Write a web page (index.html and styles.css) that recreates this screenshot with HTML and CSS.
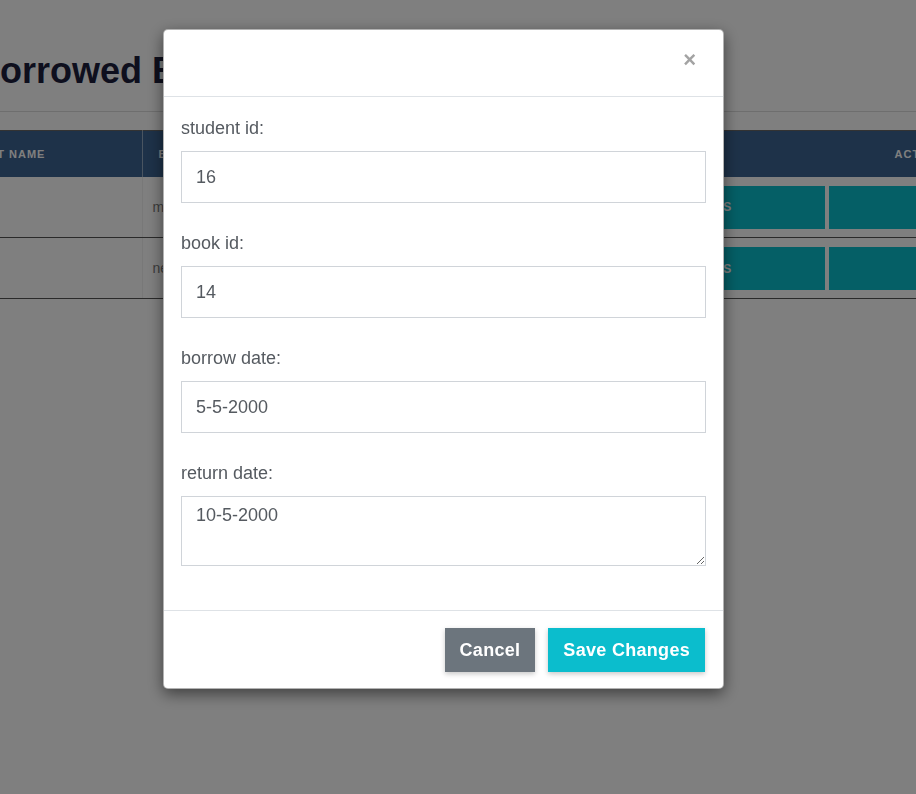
FILE: index.html
```html
<!DOCTYPE html>
<html lang="en">
<head>
<meta charset="utf-8">
<title>Borrowed Books</title>
<link rel="stylesheet" href="styles.css">
</head>
<body>
<div class="page">
  <h1 class="title">Borrowed Books</h1>
  <div class="rule"></div>
  <table class="grid">
    <colgroup>
      <col class="c-name"><col class="c-book"><col class="c-date"><col class="c-actions">
    </colgroup>
    <thead>
      <tr>
        <th>Student name</th>
        <th>Book name</th>
        <th>Borrow date</th>
        <th class="th-actions">Actions</th>
      </tr>
    </thead>
    <tbody>
      <tr>
        <td>ahmed</td>
        <td>mathematics</td>
        <td>5-5-2000</td>
        <td class="td-actions"><span class="row-btn">Details</span><span class="row-btn">Edit</span></td>
      </tr>
      <tr>
        <td>sara</td>
        <td>networks</td>
        <td>6-5-2000</td>
        <td class="td-actions"><span class="row-btn">Details</span><span class="row-btn">Edit</span></td>
      </tr>
    </tbody>
  </table>
</div>

<div class="backdrop"></div>

<div class="modal">
  <div class="modal-header">
    <span class="close">&times;</span>
  </div>
  <div class="modal-body">
    <div class="group">
      <label class="label">student id:</label>
      <input class="field" type="text" value="16">
    </div>
    <div class="group">
      <label class="label">book id:</label>
      <input class="field" type="text" value="14">
    </div>
    <div class="group">
      <label class="label">borrow date:</label>
      <input class="field" type="text" value="5-5-2000">
    </div>
    <div class="group">
      <label class="label">return date:</label>
      <textarea class="field area">10-5-2000</textarea>
    </div>
  </div>
  <div class="modal-footer">
    <button class="btn btn-cancel">Cancel</button>
    <button class="btn btn-save">Save Changes</button>
  </div>
</div>
</body>
</html>
```

FILE: styles.css
```css
html, body {
  margin: 0;
  padding: 0;
  overflow: hidden;
  background: #ffffff;
  font-family: "Liberation Sans", Arial, sans-serif;
}

.page {
  margin-left: -26px;
  padding-top: 49px;
}

.title {
  margin: 0;
  font-size: 36px;
  line-height: 43px;
  font-weight: 700;
  color: #1c1f3c;
}

.rule {
  margin-top: 19px;
  margin-left: 26px;
  height: 1px;
  background: #dcdcdc;
}

.grid {
  margin-top: 18px;
  margin-left: -44px;
  width: 1400px;
  border-collapse: collapse;
  table-layout: fixed;
}

.c-name { width: 212px; }
.c-book { width: 300px; }
.c-date { width: 140px; }
.c-actions { width: auto; }

.grid thead tr {
  height: 46px;
}

.grid thead th {
  padding: 0 0 0 16px;
  background: #3c6492;
  color: #ffffff;
  font-size: 11px;
  font-weight: 700;
  letter-spacing: 1px;
  text-transform: uppercase;
  text-align: left;
  border-top: 1px solid #666666;
  border-right: 1px solid rgba(255, 255, 255, 0.45);
}

.grid thead th.th-actions {
  padding-left: 312px;
  border-right: none;
}

.grid tbody tr {
  height: 61px;
}

.grid tbody td {
  padding: 0 0 0 10px;
  font-size: 14px;
  color: #7a7a7a;
  border-bottom: 1px solid #555555;
  border-right: 1px solid #f0f0f0;
  vertical-align: middle;
}

.grid tbody td.td-actions {
  padding: 9px 0 8px 10px;
  border-right: none;
  font-size: 0;
}

.row-btn {
  display: inline-flex;
  align-items: center;
  justify-content: center;
  box-sizing: border-box;
  width: 232px;
  height: 43px;
  margin-right: 4px;
  padding-right: 10px;
  background: #0abecc;
  color: #ffffff;
  font-size: 12px;
  font-weight: 700;
  letter-spacing: 1px;
  text-transform: uppercase;
  vertical-align: top;
}

.backdrop {
  position: fixed;
  inset: 0;
  background: rgba(0, 0, 0, 0.5);
}

.modal {
  position: fixed;
  left: 163px;
  top: 29px;
  width: 561px;
  box-sizing: border-box;
  background: #ffffff;
  border: 1px solid rgba(0, 0, 0, 0.3);
  border-radius: 5px;
  box-shadow: 0 5px 15px rgba(0, 0, 0, 0.5);
}

.modal-header {
  height: 66px;
  border-bottom: 1px solid #dee2e6;
  display: flex;
  justify-content: flex-end;
  align-items: center;
}

.close {
  margin-right: 27px;
  margin-top: -6px;
  font-size: 22px;
  line-height: 1;
  font-weight: 700;
  color: #a3a3a3;
}

.modal-body {
  padding: 19px 17px 16px;
}

.group {
  margin-bottom: 28px;
}

.label {
  display: block;
  margin-bottom: 11px;
  font-size: 18px;
  line-height: 24px;
  color: #555a60;
}

.field {
  display: block;
  width: 100%;
  height: 52px;
  box-sizing: border-box;
  margin: 0;
  padding: 0 14px;
  border: 1px solid #d0d4d9;
  border-radius: 0;
  font-family: "Liberation Sans", Arial, sans-serif;
  font-size: 18px;
  color: #555a60;
  background: #ffffff;
  outline: none;
}

.area {
  height: 70px;
  padding: 5px 14px;
  line-height: 27px;
  resize: vertical;
}

.modal-footer {
  border-top: 1px solid #dee2e6;
  padding: 17px 18px 16px;
  display: flex;
  justify-content: flex-end;
  gap: 13px;
}

.btn {
  height: 44px;
  border: none;
  margin: 0;
  padding: 0 15px;
  font-family: "Liberation Sans", Arial, sans-serif;
  font-size: 18px;
  font-weight: 700;
  letter-spacing: 0.3px;
  color: #ffffff;
  box-shadow: 0 2px 5px rgba(0, 0, 0, 0.22);
  border-radius: 0;
}

.btn-cancel {
  background: #6c757d;
}

.btn-save {
  background: #0bbdcd;
}
```
